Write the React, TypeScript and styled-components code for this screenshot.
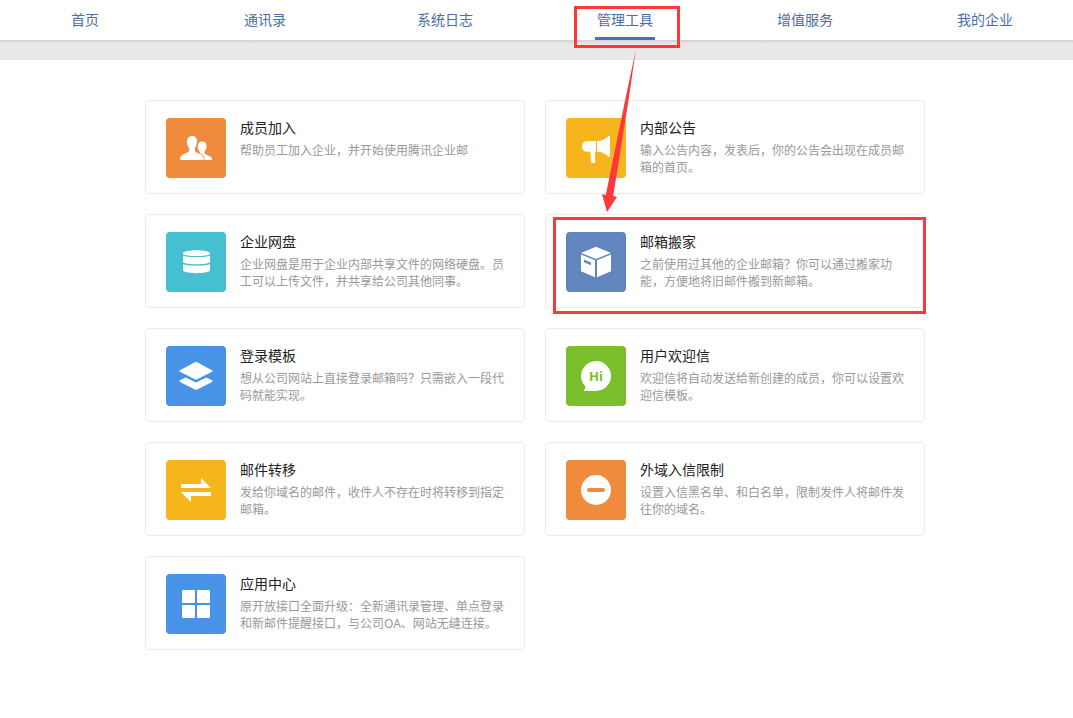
import React from "react";
import styled, { createGlobalStyle } from "styled-components";

const GlobalStyle = createGlobalStyle`
  * { box-sizing: border-box; }
  body {
    margin: 0;
    background: #fff;
    font-family: "Noto Sans", "Noto Sans CJK SC", sans-serif;
  }
`;

const Header = styled.header`
  border-bottom: 20px solid #e9e9e9;
  position: relative;
`;

const HeaderShade = styled.div`
  position: absolute;
  top: 100%;
  left: 0;
  right: 0;
  height: 4px;
  background: linear-gradient(#d2d2d2, #e9e9e9);
`;

const NavList = styled.ul`
  display: grid;
  grid-template-columns: repeat(6, 1fr);
  column-gap: 10px;
  margin: 0;
  padding: 0 3px 0 0;
  list-style: none;
`;

const NavItem = styled.li`
  position: relative;
  display: flex;
  justify-content: center;
`;

const NavLink = styled.a<{ $active: boolean }>`
  height: 40px;
  min-width: 60px;
  border-bottom: 3px solid ${(p) => (p.$active ? "#4b71a9" : "transparent")};
  color: #4a6ea6;
  font-size: 14px;
  line-height: 40px;
  text-align: center;
  text-decoration: none;
`;

const Main = styled.main`
  padding: 40px 3px 40px 0;
`;

const ToolGrid = styled.ul`
  display: grid;
  grid-template-columns: 1fr 1fr;
  gap: 20px;
  width: 100%;
  max-width: 780px;
  margin: 0 auto;
  padding: 0;
  list-style: none;
`;

const ToolItem = styled.li`
  position: relative;
`;

const Card = styled.a`
  display: flex;
  gap: 14px;
  height: 100%;
  padding: 17px 20px 15px;
  border: 1px solid #ececec;
  border-radius: 4px;
  background: #fff;
  text-decoration: none;
`;

const IconTile = styled.span<{ $color: string }>`
  flex: none;
  width: 60px;
  height: 60px;
  border-radius: 4px;
  background: ${(p) => p.$color};
`;

const Glyph = styled.svg`
  display: block;
  width: 60px;
  height: 60px;
  fill: #fff;
`;

const CardText = styled.div`
  flex: 1;
  min-width: 0;
`;

const Title = styled.h2`
  margin: 0 0 4px;
  color: #222;
  font-size: 14px;
  font-weight: 400;
  line-height: 20px;
`;

const Description = styled.p`
  margin: 0;
  color: #999;
  font-size: 12px;
  line-height: 17px;
`;

const Marker = styled.span`
  position: absolute;
  z-index: 1;
  border: 3px solid #fd3838;
  pointer-events: none;
`;

const NavMarker = styled(Marker)`
  top: 6px;
  bottom: -8px;
  left: calc(50% - 51px);
  width: 106px;
`;

const CardMarker = styled(Marker)`
  inset: 3px -1px -6px 8px;
`;

const Arrow = styled.svg`
  position: absolute;
  z-index: 1;
  bottom: 100%;
  left: 50px;
  width: 50px;
  height: 164px;
  fill: #fd3838;
  pointer-events: none;
`;

const icons = {
  people: (
    <>
      <path d="M36.300 23.500c3 0 4.300 1.900 4.200 5-.1 2.100-.8 3.700-2 5.100-.1 2 .3 2.600 2.400 3.400 3.500 1.300 5.100 2 5.100 4.900H34V36l-.3-2.400c-1.200-1.400-1.900-3-1.900-5.100 0-3.100 1.500-5 4.500-5z" />
      <path
        d="M26 18c3.600 0 5.200 2.300 5 6.100-.1 2.600-.9 4.600-2.300 6.300-.2 2.500.3 3.400 2.900 4.500 4.400 1.700 6.300 2.900 6.300 7H14c0-4.100 2.300-5.300 6.600-7.100 2.400-1 2.900-2 2.700-4.400-1.400-1.700-2.300-3.700-2.300-6.300 0-3.800 1.600-6.100 5-6.100z"
        stroke="#f08b3d"
        strokeWidth="1.600"
        paintOrder="stroke"
      />
    </>
  ),
  megaphone: (
    <>
      <path d="M21.200 23H30v10.800h-1l.3 10c0 .8-.4 1.200-1.200 1.200H26.200c-.8 0-1.200-.4-1.300-1.200l-.5-10h-3.200c-6.900 0-6.900-10.800 0-10.800z" />
      <path d="M31 23c5 0 8.500-1.900 11.500-5 .8-.8 1.500-.5 1.500.5v19.600c0 1-.7 1.300-1.500.6-3-2.800-6.500-4.900-11.500-4.900z" />
    </>
  ),
  disk: (
    <>
      <path d="M17 21.300c0-4 27-4 27 0v.8c-2 2.700-25 2.700-27 0z" />
      <path d="M17 23.400c3.500 2.300 23.500 2.300 27 0v6.700c-1 3-26 3-27 0z" />
      <path d="M17 32c3.500 2.200 23.500 2.200 27 0v6c0 4.200-27 4.200-27 0z" />
    </>
  ),
  box: (
    <>
      <path d="M30 14.700 45 20.900 30 27 15 20.900z" />
      <path
        fillRule="evenodd"
        d="M15 22.500 29 28.300V45.200L15 39.200zM18 27.500v2.800l7 3v-2.800z"
      />
      <path d="M31 28.300 45 22.500v16.700L31 45.200z" />
    </>
  ),
  layers: (
    <>
      <path d="M28.800 16.300q1.200-.6 2.400 0L46 24.200q1.500.8 0 1.600l-14.800 7.500q-1.200.6-2.400 0L14 25.800q-1.500-.8 0-1.600z" />
      <path d="M19.800 31.400 28.800 36q1.200.6 2.400 0l9-4.600L46 34.300q1.500.8 0 1.600l-14.800 7.500q-1.200.6-2.400 0L14 35.900q-1.500-.8 0-1.600z" />
    </>
  ),
  welcome: (
    <>
      <path d="M30 15a15 15 0 0 1 0 30H18.500c-.7 0-.8-.5-.4-1 .8-1 1.300-2 1.400-3.300A15 15 0 0 1 30 15z" />
      <text
        x="23"
        y="35"
        fill="#7abf2b"
        fontFamily="Noto Sans, sans-serif"
        fontSize="13"
        fontWeight="700"
      >
        Hi
      </text>
    </>
  ),
  transfer: (
    <>
      <path d="M15 24h20v-6l10 10H15z" />
      <path d="M45 36H25v6L15 32h30z" />
    </>
  ),
  block: (
    <path
      fillRule="evenodd"
      d="M30 15a15 15 0 1 0 0 30 15 15 0 0 0 0-30zM23 28h14a2 2 0 0 1 0 4H23a2 2 0 0 1 0-4z"
    />
  ),
  apps: (
    <>
      <rect x="16" y="16" width="13" height="13" rx="1" />
      <rect x="31" y="16" width="13" height="13" rx="1" />
      <rect x="16" y="31" width="13" height="13" rx="1" />
      <rect x="31" y="31" width="13" height="13" rx="1" />
    </>
  ),
};

type Tool = {
  title: string;
  text: string;
  color: string;
  icon: keyof typeof icons;
  marked?: boolean;
};

const navItems = ["首页", "通讯录", "系统日志", "管理工具", "增值服务", "我的企业"];
const activeItem = "管理工具";

const tools: Tool[] = [
  { title: "成员加入", text: "帮助员工加入企业，并开始使用腾讯企业邮", color: "#f08b3d", icon: "people" },
  { title: "内部公告", text: "输入公告内容，发表后，你的公告会出现在成员邮箱的首页。", color: "#f6b51c", icon: "megaphone" },
  { title: "企业网盘", text: "企业网盘是用于企业内部共享文件的网络硬盘。员工可以上传文件，并共享给公司其他同事。", color: "#45c0d1", icon: "disk" },
  { title: "邮箱搬家", text: "之前使用过其他的企业邮箱？你可以通过搬家功能，方便地将旧邮件搬到新邮箱。", color: "#6286be", icon: "box", marked: true },
  { title: "登录模板", text: "想从公司网站上直接登录邮箱吗？只需嵌入一段代码就能实现。", color: "#4893e8", icon: "layers" },
  { title: "用户欢迎信", text: "欢迎信将自动发送给新创建的成员，你可以设置欢迎信模板。", color: "#7abf2b", icon: "welcome" },
  { title: "邮件转移", text: "发给你域名的邮件，收件人不存在时将转移到指定邮箱。", color: "#f6b51c", icon: "transfer" },
  { title: "外域入信限制", text: "设置入信黑名单、和白名单，限制发件人将邮件发往你的域名。", color: "#f08b3d", icon: "block" },
  { title: "应用中心", text: "原开放接口全面升级：全新通讯录管理、单点登录和新邮件提醒接口，与公司OA、网站无缝连接。", color: "#4893e8", icon: "apps" },
];

export default function App() {
  return (
    <>
      <GlobalStyle />
      <Header>
        <nav>
          <NavList>
            {navItems.map((label) => (
              <NavItem key={label}>
                <NavLink href="#" $active={label === activeItem}>
                  {label}
                </NavLink>
                {label === activeItem && <NavMarker />}
              </NavItem>
            ))}
          </NavList>
        </nav>
        <HeaderShade />
      </Header>
      <Main>
        <ToolGrid>
          {tools.map((tool) => (
            <ToolItem key={tool.title}>
              <Card href="#">
                <IconTile $color={tool.color}>
                  <Glyph viewBox="0 0 60 60" aria-hidden="true">
                    {icons[tool.icon]}
                  </Glyph>
                </IconTile>
                <CardText>
                  <Title>{tool.title}</Title>
                  <Description>{tool.text}</Description>
                </CardText>
              </Card>
              {tool.marked && (
                <>
                  <CardMarker />
                  <Arrow viewBox="0 0 50 164" aria-hidden="true">
                    <path d="M40.800 0 34 47 18.200 146 22 147 12 162 7 144 10.800 145 31 46z" />
                  </Arrow>
                </>
              )}
            </ToolItem>
          ))}
        </ToolGrid>
      </Main>
    </>
  );
}
